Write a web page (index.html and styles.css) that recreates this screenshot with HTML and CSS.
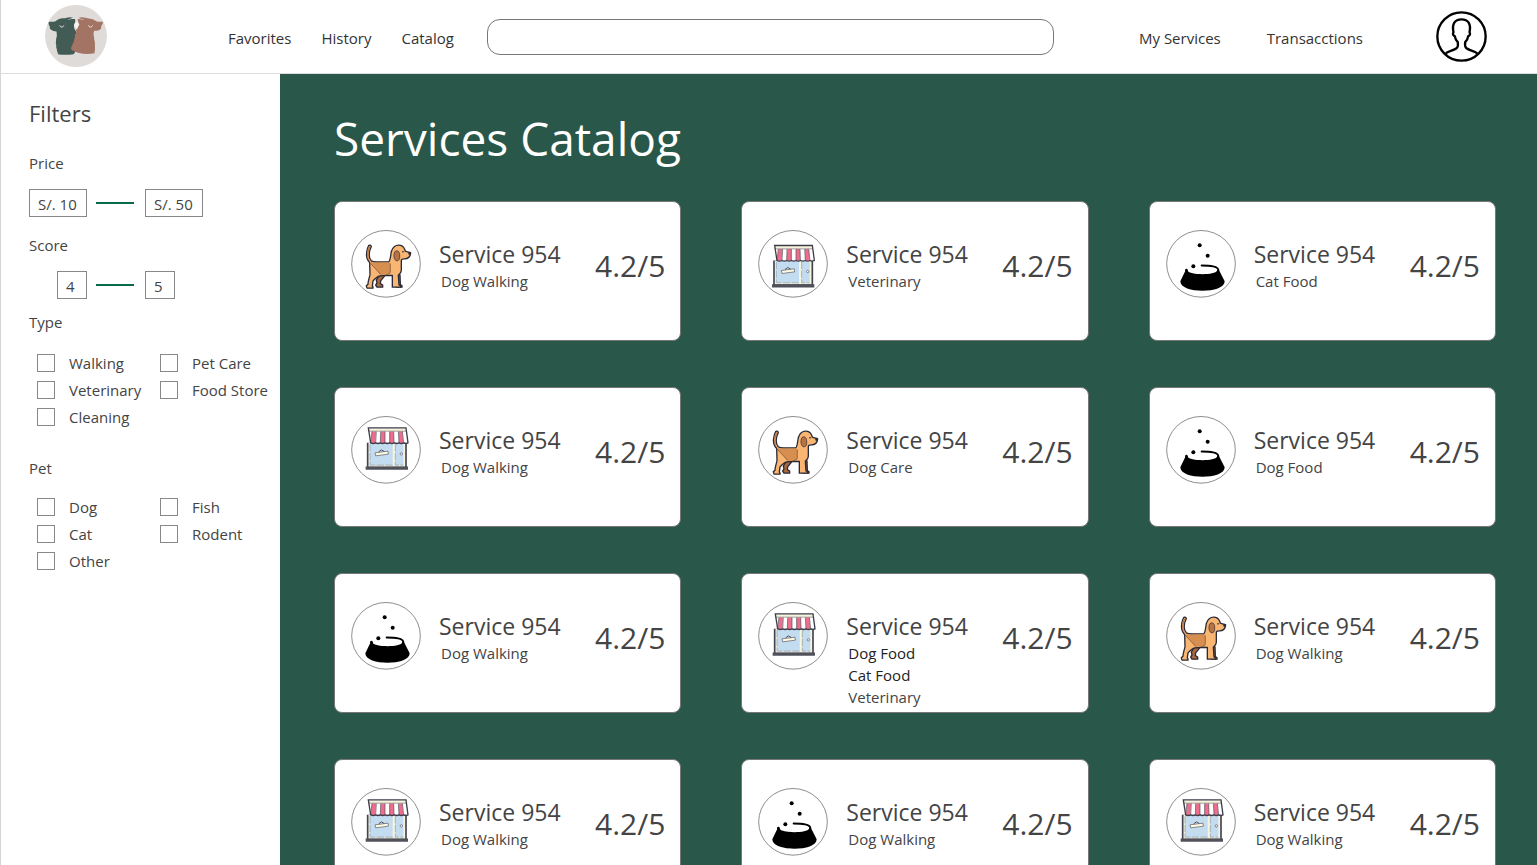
FILE: index.html
```html
<!DOCTYPE html>
<html lang="en">
<head>
<meta charset="utf-8">
<meta name="viewport" content="width=device-width, initial-scale=1">
<title>Services Catalog</title>
<link rel="stylesheet" href="styles.css">
</head>
<body>
<svg class="sprite" aria-hidden="true">
  <defs>
    <g id="storefront">
      <path d="M75 120h115v76H75z" fill="#f5f4df" stroke="#444450" stroke-width="5"/>
      <path d="M82 122h68v67H82zM158 122h24v67h-24z" fill="#c4dcf0"/>
      <path d="M82 126v63M150 189H83M158 126v63h24" fill="none" stroke="#8996a5" stroke-width="2" stroke-dasharray="22 4"/>
      <path d="M70 122l7-45h113l6 45z" fill="#fff"/>
      <path d="M88 87h12l-2 36H85zM115 87h12v36h-14zM141 87h12l1 36h-13zM168 87h11l3 36h-13z" fill="#ee6d8c"/>
      <path d="M88 87l-4 35M101 87l-2 35M114 87l-1 35M127 87v35M141 87v35M153 87l1 35M167 87l2 35M179 87l4 35" stroke="#4b4854" stroke-width="2"/>
      <path d="M77 79h113v8H76z" fill="#f8f4db"/>
      <path d="M76 87H191" stroke="#77767c" stroke-width="2"/>
      <path d="M77 77h113l6 45q-7 4-13 0-7 4-14 0-7 4-14 0-7 4-14 0-7 4-14 0-7 4-14 0-7 4-14 0-7 4-15 0z" fill="none" stroke="#3d3d49" stroke-width="4"/>
      <path d="M97 152l39-5 1 9-38 5z" fill="#fffbe4" stroke="#54545e" stroke-width="2"/>
      <path d="M108 149l8-6 9 5" fill="none" stroke="#54545e" stroke-width="3"/>
      <circle cx="176" cy="155" r="3.5" fill="#fff" stroke="#555561" stroke-width="2"/>
      <path d="M69 193h127v10H69z" fill="#51515b"/>
    </g>
  </defs>
  <symbol id="dog" viewBox="36 31 210 203">
    <ellipse cx="141" cy="132" rx="103" ry="100" fill="#fff" stroke="#777" stroke-width="2.5"/>
    <g stroke="#2b2b38" stroke-width="4" stroke-linejoin="round" stroke-linecap="round">
      <path d="M121 164l-9 17 2 8-4 7 4 6h17v-6l-7-5 1-8 12-15z" fill="#a9683b"/>
      <path d="M168 165h15l1 29 5 4v4h-17z" fill="#a9683b"/>
      <path d="M92 128c-8-8-11-19-9-31 1-8 3-15 6-20 2-2 7-1 8 3-8 16-9 34 0 43 7 4 14 3 22 3h30c5-3 5-14 8-31 4-12 12-19 22-19 9 0 15 5 18 12l2 6c6 3 12 3 16 5-1 12-9 18-19 18-5 0-9 1-9 5v29c0 7-5 11-9 15l2 29 5 3v4h-25v-35h-22l-15 1c-9 2-15 8-21 15l-2 15 2 4v3H84l-2-7 5-5c0-10 4-18 6-29z" fill="#f9b572"/>
    </g>
    <path d="M91 125c10 5 20 4 33 3h29v29c0 6-7 8-14 8h-14z" fill="#d68f50"/>
    <path d="M94 130l31 34M154 131v25c0 6-7 8-14 9" fill="none" stroke="#66452e" stroke-width="2"/>
    <path d="M85 97c1-8 3-14 6-18l3 2c-7 16-8 33-1 43-7-7-10-15-8-27z" fill="#bd7745"/>
    <path d="M168 95c8-5 13 0 14 10 1 12-2 18-8 18-9 0-12-18-6-28z" fill="#b87345" stroke="#493a36" stroke-width="2.5"/>
    <circle cx="192" cy="96" r="2.5" fill="#2b2b38"/>
    <path d="M207 98c3-3 9-1 8 3s-4 5-6 4z" fill="#2b2b38"/>
  </symbol>
  <symbol id="shop-low" viewBox="27 31 210 203">
    <ellipse cx="132" cy="132" rx="103" ry="100" fill="#fff" stroke="#777" stroke-width="2.5"/>
    <use href="#storefront"/>
  </symbol>
  <symbol id="shop" viewBox="27 31 210 203">
    <ellipse cx="132" cy="132" rx="103" ry="100" fill="#fff" stroke="#777" stroke-width="2.5"/>
    <use href="#storefront" x="2" y="-11"/>
  </symbol>
  <symbol id="bowl" viewBox="34 31 210 203">
    <ellipse cx="139" cy="132" rx="103" ry="100" fill="#fff" stroke="#777" stroke-width="2.5"/>
    <circle cx="135" cy="76" r="6"/>
    <circle cx="159" cy="108" r="6"/>
    <circle cx="116" cy="139" r="6"/>
    <path d="M95 147l4 6c5 13 83 14 88 0l1-4 6 4 16 31c0 38-133 38-133 0z"/>
    <path d="M94 151q2-3 3 2M141 137c24 0 51 2 50 15" fill="none" stroke="#000" stroke-width="6" stroke-linecap="round"/>
  </symbol>
</svg>

<div class="app">
  <header class="topbar">
    <a class="logo" href="#" aria-label="Home">
      <svg viewBox="45 15 188 188" aria-hidden="true">
        <circle cx="139" cy="109" r="94" fill="#dfdbd8"/>
        <path d="M57 66c6 0 14 1 20-2 5-4 10-7 17-8 8-2 11 1 16-2 7-2 14-2 20 0-5 3-12 3-17 5 9 0 15-3 23-1l1 9c-6 6-5 17-1 23 4 5 5 9 1 17l3 9-4 13 4 9c1 8-2 19-8 26-18 3-37 2-48 0 1-5-3-8-3-12 1-4-3-7-2-11 1-5-2-9-1-13 1-6 0-12 3-18l-1-15c-7 0-16-3-20-8l-1-8c-3-3-4-9-2-13z" fill="#425b55"/>
        <path d="M220 66c-6 0-14 1-20-2-6-4-10-7-18-7-6-1-10-2-15-3-8-2-14-2-20 0 5 4 13 4 18 6-8 0-15-4-21-2l3 13c1 7-7 14-8 21 3 4-2 7 0 12-5 3-1 8-5 12 1 5-3 7-2 12-5 5-3 8-7 13 0 5-3 8 2 11 17 9 41 15 68 9 1-4 0-8 2-12-2-5 1-7-1-11 2-5-1-8 0-12-3-6-1-11-3-16-1-7-1-10 1-17 8 0 17-1 21-7l1-8c4-4 5-8 4-12z" fill="#a37363"/>
        <path d="M90 77c1 6 10 7 12 0M177 77c1 6 10 7 12 0" fill="none" stroke="#f1ebe5" stroke-width="3"/>
        <path d="M140 63l9 10-7 16-9-12z" fill="#f7f4f0"/>
      </svg>
    </a>
    <nav class="nav" aria-label="Main">
      <a href="#">Favorites</a>
      <a href="#">History</a>
      <a href="#">Catalog</a>
    </nav>
    <input class="search" type="search" aria-label="Search">
    <nav class="nav nav-account" aria-label="Account">
      <a href="#">My Services</a>
      <a href="#">Transacctions</a>
    </nav>
    <a class="avatar" href="#" aria-label="Profile">
      <svg viewBox="48 33 152 152" fill="none" stroke="#000" stroke-width="7" aria-hidden="true">
        <circle cx="124" cy="109" r="72"/>
        <path d="M77 159c10-7 24-9 32-15 5-4 5-12 4-18-6-6-8-11-9-18-5-1-7-8-4-11-5-26 4-39 24-39s29 13 24 39c3 3 1 10-4 11-1 7-3 12-9 18-1 6-1 14 4 18 8 6 22 8 32 15" stroke-linejoin="round"/>
      </svg>
    </a>
  </header>

  <aside class="sidebar">
    <h2>Filters</h2>
    <form>
      <fieldset class="price">
        <legend>Price</legend>
        <div class="range">
          <input type="text" value="S/. 10" aria-label="Minimum price">
          <span class="dash"></span>
          <input type="text" value="S/. 50" aria-label="Maximum price">
        </div>
      </fieldset>
      <fieldset class="score-filter">
        <legend>Score</legend>
        <div class="range range-score">
          <input type="text" value="4" aria-label="Minimum score">
          <span class="dash"></span>
          <input type="text" value="5" aria-label="Maximum score">
        </div>
      </fieldset>
      <fieldset class="type">
        <legend>Type</legend>
        <div class="options">
          <label><input type="checkbox">Walking</label>
          <label><input type="checkbox">Pet Care</label>
          <label><input type="checkbox">Veterinary</label>
          <label><input type="checkbox">Food Store</label>
          <label><input type="checkbox">Cleaning</label>
        </div>
      </fieldset>
      <fieldset class="pet">
        <legend>Pet</legend>
        <div class="options">
          <label><input type="checkbox">Dog</label>
          <label><input type="checkbox">Fish</label>
          <label><input type="checkbox">Cat</label>
          <label><input type="checkbox">Rodent</label>
          <label><input type="checkbox">Other</label>
        </div>
      </fieldset>
    </form>
  </aside>

  <main class="catalog">
    <h1>Services Catalog</h1>
    <div class="cards">
      <article class="card">
        <svg class="icon" aria-hidden="true"><use href="#dog"/></svg>
        <div class="info"><h3>Service 954</h3><p>Dog Walking</p></div>
        <span class="rating">4.2/5</span>
      </article>
      <article class="card">
        <svg class="icon" aria-hidden="true"><use href="#shop-low"/></svg>
        <div class="info"><h3>Service 954</h3><p>Veterinary</p></div>
        <span class="rating">4.2/5</span>
      </article>
      <article class="card">
        <svg class="icon" aria-hidden="true"><use href="#bowl"/></svg>
        <div class="info"><h3>Service 954</h3><p>Cat Food</p></div>
        <span class="rating">4.2/5</span>
      </article>
      <article class="card">
        <svg class="icon" aria-hidden="true"><use href="#shop"/></svg>
        <div class="info"><h3>Service 954</h3><p>Dog Walking</p></div>
        <span class="rating">4.2/5</span>
      </article>
      <article class="card">
        <svg class="icon" aria-hidden="true"><use href="#dog"/></svg>
        <div class="info"><h3>Service 954</h3><p>Dog Care</p></div>
        <span class="rating">4.2/5</span>
      </article>
      <article class="card">
        <svg class="icon" aria-hidden="true"><use href="#bowl"/></svg>
        <div class="info"><h3>Service 954</h3><p>Dog Food</p></div>
        <span class="rating">4.2/5</span>
      </article>
      <article class="card">
        <svg class="icon" aria-hidden="true"><use href="#bowl"/></svg>
        <div class="info"><h3>Service 954</h3><p>Dog Walking</p></div>
        <span class="rating">4.2/5</span>
      </article>
      <article class="card">
        <svg class="icon" aria-hidden="true"><use href="#shop"/></svg>
        <div class="info"><h3>Service 954</h3><p class="dark">Dog Food</p><p class="dark">Cat Food</p><p>Veterinary</p></div>
        <span class="rating">4.2/5</span>
      </article>
      <article class="card">
        <svg class="icon" aria-hidden="true"><use href="#dog"/></svg>
        <div class="info"><h3>Service 954</h3><p>Dog Walking</p></div>
        <span class="rating">4.2/5</span>
      </article>
      <article class="card">
        <svg class="icon" aria-hidden="true"><use href="#shop"/></svg>
        <div class="info"><h3>Service 954</h3><p>Dog Walking</p></div>
        <span class="rating">4.2/5</span>
      </article>
      <article class="card">
        <svg class="icon" aria-hidden="true"><use href="#bowl"/></svg>
        <div class="info"><h3>Service 954</h3><p>Dog Walking</p></div>
        <span class="rating">4.2/5</span>
      </article>
      <article class="card">
        <svg class="icon" aria-hidden="true"><use href="#shop"/></svg>
        <div class="info"><h3>Service 954</h3><p>Dog Walking</p></div>
        <span class="rating">4.2/5</span>
      </article>
    </div>
  </main>
</div>
</body>
</html>
```
FILE: styles.css
```css
* {
  box-sizing: border-box;
}

body,
h1,
h2,
h3,
p,
fieldset,
legend {
  margin: 0;
  padding: 0;
}

body {
  font-family: "Segoe UI", "Open Sans", "Noto Sans", sans-serif;
  font-size: 15px;
  line-height: 22px;
  color: #444;
  background: #fff;
}

h1,
h2,
h3 {
  font-weight: 400;
}

a {
  color: inherit;
  text-decoration: none;
}

input {
  font: inherit;
  color: inherit;
}

svg {
  display: block;
}

.sprite {
  position: absolute;
  width: 0;
  height: 0;
}

.app {
  display: grid;
  grid-template-columns: 280px 1fr;
  grid-template-rows: auto 1fr;
  height: 100vh;
}

/* Top bar */
.topbar {
  grid-column: 1 / -1;
  display: flex;
  align-items: center;
  padding: 5px 50px 6px 44px;
  border-bottom: 1px solid #ddd;
  border-left: 1px solid #d5d5d5;
}

.logo svg {
  width: 62px;
  height: 62px;
}

.nav {
  display: flex;
  gap: 30px;
  margin: 3px 33px 0 121px;
  color: #333;
  white-space: nowrap;
}

.nav-account {
  gap: 46px;
  margin: 3px 73px 0 85px;
}

.search {
  flex: 1;
  min-width: 0;
  height: 36px;
  margin-top: 2px;
  padding: 0 16px;
  border: 1px solid #777;
  border-radius: 13px;
  background: #fff;
  appearance: none;
}

.avatar svg {
  width: 51px;
  height: 51px;
}

/* Filters */
.sidebar {
  padding: 23px 8px 24px 28px;
  border-left: 1px solid #d5d5d5;
}

.sidebar h2 {
  font-size: 22px;
  line-height: 32px;
}

fieldset {
  min-width: 0;
  border: 0;
}

.price {
  margin-top: 23px;
}

.score-filter {
  margin-top: 17px;
}

.type {
  margin-top: 12px;
}

.pet {
  margin-top: 29px;
}

.range {
  display: flex;
  align-items: center;
  gap: 9px;
  margin-top: 15px;
}

.range input {
  width: 58px;
  height: 28px;
  padding: 2px 8px 0;
  border: 1px solid #888;
  background: #fff;
}

.range-score {
  padding-left: 28px;
}

.range-score input {
  width: 30px;
}

.dash {
  width: 38px;
  height: 2px;
  background: #0a6b4b;
}

.range input + .dash + input {
  margin-left: 2px;
}

.options {
  display: grid;
  grid-template-columns: 123px 1fr;
  row-gap: 5px;
  margin: 19px 0 0 8px;
}

.pet .options {
  margin-top: 17px;
}

.options label {
  display: flex;
  align-items: center;
  gap: 14px;
  white-space: nowrap;
}

.options input {
  flex: none;
  width: 18px;
  height: 18px;
  margin: 0;
  border: 1px solid #888;
  background: #fff;
  appearance: none;
}

.options input:checked {
  background: #29584a;
}

/* Catalog */
.catalog {
  min-height: 0;
  padding: 32px 41px 46px 54px;
  overflow-y: auto;
  scrollbar-width: none;
  background: #29584a;
}

.catalog h1 {
  font-size: 46px;
  line-height: 64px;
  color: #fff;
}

.cards {
  display: grid;
  grid-template-columns: repeat(3, 1fr);
  gap: 46px 60px;
  margin-top: 31px;
}

.card {
  display: flex;
  align-items: flex-start;
  min-height: 140px;
  padding: 28px 15px 0 16px;
  border: 1px solid #777;
  border-radius: 8px;
  background: #fff;
}

.icon {
  flex: none;
  width: 70px;
  height: 68px;
}

.info {
  flex: 1;
  margin: 8px 0 0 18px;
}

.info h3 {
  font-size: 23px;
  line-height: 32px;
}

.info p {
  padding-left: 2px;
}

.info .dark {
  color: #222;
}

.rating {
  margin-top: 12px;
  font-size: 30px;
  line-height: 48px;
}
```
